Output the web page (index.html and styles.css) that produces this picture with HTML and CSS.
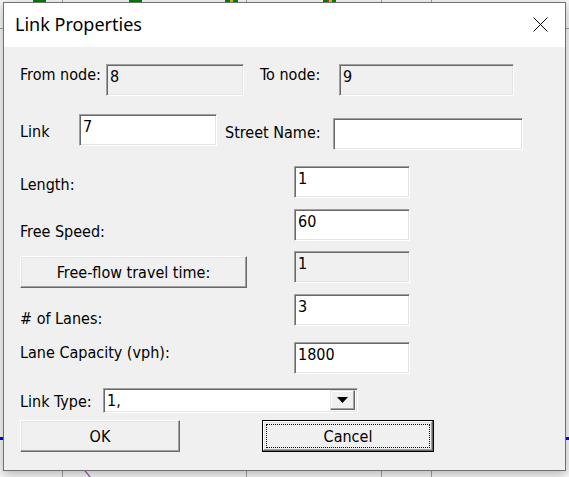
FILE: index.html
```html
<!DOCTYPE html>
<html lang="en">
<head>
<meta charset="utf-8">
<title>Link Properties</title>
<link rel="stylesheet" href="styles.css">
</head>
<body>
<div class="desktop">
  <div class="deco hline-top"></div>
  <div class="deco hline-blue"></div>
  <div class="deco vline v1"></div>
  <div class="deco vline v2"></div>
  <div class="deco vline v3"></div>
  <div class="deco vline v4"></div>
  <div class="deco node n1"></div>
  <div class="deco node n2"></div>
  <div class="deco node n3"></div>
  <div class="deco node n4"></div>
  <div class="deco diag"></div>

  <div class="dialog">
    <div class="titlebar">
      <span class="title">Link Properties</span>
      <svg class="close" width="15" height="15" viewBox="0 0 15 15">
        <path d="M0.5 0.5 L14.5 14.5 M14.5 0.5 L0.5 14.5" stroke="#000" stroke-width="1" fill="none"/>
      </svg>
    </div>
    <div class="content">
      <div class="row r1">
        <span class="lbl l-from">From node:</span>
        <div class="field disabled f-from">8</div>
        <span class="lbl l-to">To node:</span>
        <div class="field disabled f-to">9</div>
      </div>
      <div class="row r2">
        <span class="lbl l-link">Link</span>
        <div class="field f-link">7</div>
        <span class="lbl l-street">Street Name:</span>
        <div class="field f-street"></div>
      </div>
      <div class="row r3">
        <span class="lbl l-col">Length:</span>
        <div class="field f-col">1</div>
      </div>
      <div class="row r4">
        <span class="lbl l-col">Free Speed:</span>
        <div class="field f-col">60</div>
      </div>
      <div class="row r5">
        <div class="btn b-fftt">Free-flow travel time:</div>
        <div class="field disabled f-col">1</div>
      </div>
      <div class="row r6">
        <span class="lbl l-col">#&nbsp;of Lanes:</span>
        <div class="field f-col">3</div>
      </div>
      <div class="row r7">
        <span class="lbl l-col">Lane Capacity (vph):</span>
        <div class="field f-col">1800</div>
      </div>
      <div class="row r8">
        <span class="lbl l-type">Link Type:</span>
        <div class="combo">
          <span class="combo-text">1,</span>
          <div class="combo-btn">
            <svg width="11" height="6" viewBox="0 0 11 6"><path d="M0 0 H11 L5.5 6 Z" fill="#000"/></svg>
          </div>
        </div>
      </div>
      <div class="row r9">
        <div class="btn b-ok">OK</div>
        <div class="btn b-cancel"><span class="focus">Cancel</span></div>
      </div>
    </div>
  </div>
</div>
</body>
</html>
```
FILE: styles.css
```css
html, body {
  margin: 0;
  padding: 0;
}
body {
  width: 569px;
  height: 477px;
  overflow: hidden;
  background: #f7f7f7;
  font-family: "DejaVu Sans Condensed", "DejaVu Sans", sans-serif;
  font-stretch: condensed;
  font-size: 16px;
  color: #000;
}
.desktop {
  position: relative;
  width: 569px;
  height: 477px;
}
.deco { position: absolute; }
.hline-top { left: 0; top: 28px; width: 569px; height: 1px; background: #a0a0a0; }
.hline-blue { left: 0; top: 437px; width: 569px; height: 3px; background: #0000ff; }
.vline { top: 0; width: 1px; height: 477px; background: #a0a0a0; }
.v1 { left: 62px; }
.v2 { left: 246px; }
.v3 { left: 431px; }
.v4 { left: 381px; }
.node { top: 0; height: 3px; width: 13px; background: #008000; }
.n1 { left: 33px; }
.n2 { left: 129px; }
.n3 { left: 225px; background: linear-gradient(90deg, #008000 0 40%, #d4c000 40% 60%, #008000 60%); }
.n4 { left: 323px; background: linear-gradient(90deg, #008000 0 30%, #c03030 30% 50%, #d0d000 50% 70%, #008000 70%); }
.diag { left: 88px; top: 468px; width: 1px; height: 14px; background: #8030c0; transform: rotate(-40deg); }

.dialog {
  position: absolute;
  left: 3px;
  top: 2px;
  width: 563px;
  height: 469px;
  box-sizing: border-box;
  border: 1px solid #717171;
  background: #f0f0f0;
  box-shadow: 0 3px 10px rgba(0, 0, 0, 0.28);
  display: flex;
  flex-direction: column;
}
.titlebar {
  height: 44px;
  background: #fff;
  display: flex;
  align-items: center;
  padding: 0 17px 2px 11px;
  box-sizing: border-box;
  flex: none;
}
.title {
  font-family: "Noto Sans", "Open Sans", sans-serif;
  font-stretch: normal;
  font-size: 18px;
  flex: 1;
}
.close { display: block; margin-top: 1px; }

.content {
  padding: 17px 0 0 16px;
  display: flex;
  flex-direction: column;
}
.row {
  display: flex;
  align-items: flex-start;
  line-height: 19px;
}
.lbl { white-space: nowrap; flex: none; }

.field {
  box-sizing: border-box;
  height: 32px;
  flex: none;
  background: #fff;
  border: 1px solid;
  border-color: #a0a0a0 #fff #fff #a0a0a0;
  box-shadow: inset 1px 1px #696969, inset -1px -1px #e3e3e3;
  padding: 2px 3px 0 3px;
  line-height: 19px;
}
.field.disabled { background: #f0f0f0; }

.btn {
  box-sizing: border-box;
  height: 32px;
  flex: none;
  background: #f0f0f0;
  border: 1px solid;
  border-color: #fff #696969 #696969 #fff;
  box-shadow: inset -1px -1px #a0a0a0, inset 1px 1px #e3e3e3;
  display: flex;
  align-items: center;
  justify-content: center;
}

/* row 1 */
.r1 { margin-top: 0; }
.r1 .lbl { margin-top: 1px; }
.l-from { width: 86px; }
.f-from { width: 138px; }
.l-to { width: 79px; margin-left: 16px; }
.f-to { width: 175px; }

/* row 2 */
.r2 { margin-top: 18px; }
.l-link { width: 59px; margin-top: 8px; }
.f-link { width: 138px; }
.l-street { width: 108px; margin-left: 8px; margin-top: 9px; }
.f-street { width: 190px; margin-top: 4px; }

/* column rows */
.l-col { width: 274px; }
.f-col { width: 116px; }
.r3 { margin-top: 16px; }
.r3 .lbl { margin-top: 9px; }
.r4 { margin-top: 11px; }
.r4 .lbl { margin-top: 13px; }
.r5 { margin-top: 10px; }
.b-fftt { width: 227px; margin-top: 5px; margin-right: 47px; }
.r6 { margin-top: 6px; }
.r6 .lbl { margin-top: 15px; }
.r7 { margin-top: 14px; }
.r7 .lbl { margin-top: 1px; }

/* row 8 */
.r8 { margin-top: 14px; }
.l-type { width: 83px; margin-top: 4px; }
.combo {
  box-sizing: border-box;
  width: 255px;
  height: 25px;
  background: #fff;
  border: 1px solid;
  border-color: #a0a0a0 #fff #fff #a0a0a0;
  box-shadow: inset 1px 1px #696969, inset -1px -1px #e3e3e3;
  padding: 1px 2px 2px 3px;
  display: flex;
  align-items: stretch;
}
.combo-text { flex: 1; line-height: 19px; padding-top: 1px; }
.combo-btn {
  width: 25px;
  box-sizing: border-box;
  background: #f0f0f0;
  border: 1px solid;
  border-color: #e3e3e3 #696969 #696969 #e3e3e3;
  box-shadow: inset -1px -1px #a0a0a0, inset 1px 1px #fff;
  display: flex;
  align-items: center;
  justify-content: center;
}
.combo-btn svg { display: block; }

/* row 9 */
.r9 { margin-top: 7px; }
.b-ok { width: 160px; }
.b-cancel {
  width: 172px;
  margin-left: 82px;
  border: 1px solid #000;
  box-shadow: inset -1px -1px #696969, inset 1px 1px #fff, inset -2px -2px #a0a0a0, inset 2px 2px #e3e3e3;
  padding: 3px;
  align-items: stretch;
}
.focus {
  flex: 1;
  border: 1px dotted #000;
  display: flex;
  align-items: center;
  justify-content: center;
}
```
